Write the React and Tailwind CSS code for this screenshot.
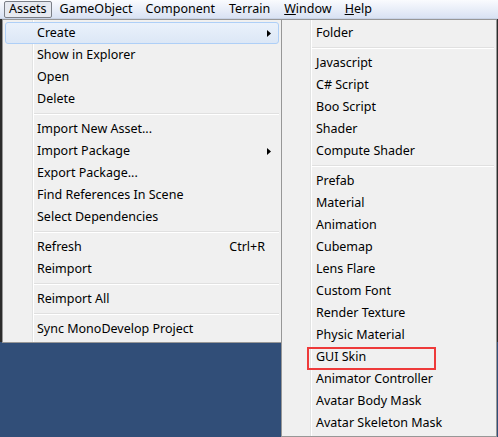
import React from 'react';

const assetsMenu = [
  { label: 'Create', arrow: true, active: true },
  { label: 'Show in Explorer' },
  { label: 'Open' },
  { label: 'Delete' },
  'sep',
  { label: 'Import New Asset...' },
  { label: 'Import Package', arrow: true },
  { label: 'Export Package...' },
  { label: 'Find References In Scene' },
  { label: 'Select Dependencies' },
  'sep',
  { label: 'Refresh', shortcut: 'Ctrl+R' },
  { label: 'Reimport' },
  'sep',
  { label: 'Reimport All' },
  'sep',
  { label: 'Sync MonoDevelop Project' },
];

const createMenu = [
  { label: 'Folder' },
  'sep',
  { label: 'Javascript' },
  { label: 'C# Script' },
  { label: 'Boo Script' },
  { label: 'Shader' },
  { label: 'Compute Shader' },
  'sep',
  { label: 'Prefab' },
  { label: 'Material' },
  { label: 'Animation' },
  { label: 'Cubemap' },
  { label: 'Lens Flare' },
  { label: 'Custom Font' },
  { label: 'Render Texture' },
  { label: 'Physic Material' },
  { label: 'GUI Skin', marked: true },
  { label: 'Animator Controller' },
  { label: 'Avatar Body Mask' },
  { label: 'Avatar Skeleton Mask' },
];

function Arrow() {
  return (
    <svg width="4" height="7" viewBox="0 0 4 7" className="absolute right-[8px] top-[8px]">
      <path d="M0 0 L4 3.5 L0 7 Z" fill="#000" />
    </svg>
  );
}

function Menu({ items, gutter, textPad, className }) {
  return (
    <div className={`absolute border border-[#979797] bg-[#f0f0f0] py-[2px] ${className}`}>
      {/* icon gutter line */}
      <div className="absolute top-0 bottom-0 flex" style={{ left: gutter }}>
        <div className="w-px h-full bg-[#e2e3e3]" />
        <div className="w-px h-full bg-white" />
      </div>
      {items.map((it, i) =>
        it === 'sep' ? (
          <div key={i} className="h-[8px] flex flex-col justify-center pr-[2px]" style={{ paddingLeft: gutter + 1 }}>
            <div className="h-px bg-[#e0e0e0]" />
            <div className="h-px bg-white" />
          </div>
        ) : (
          <div key={i} className="relative h-[22px] flex items-center mx-[2px]">
            {it.active && (
              <div className="absolute inset-0 rounded-[3px] border border-[#aecff7] bg-gradient-to-b from-[#eaf1fb] to-[#dce7f6]" />
            )}
            {it.marked && (
              <div className="absolute left-[23px] top-[1px] w-[129px] h-[23px] border-2 border-[#ee3a3a]" />
            )}
            <span className="relative whitespace-nowrap" style={{ paddingLeft: textPad }}>{it.label}</span>
            {it.shortcut && <span className="relative ml-auto mr-[14px]">{it.shortcut}</span>}
            {it.arrow && <Arrow />}
          </div>
        )
      )}
    </div>
  );
}

export default function App() {
  return (
    <div className="relative w-[498px] h-[437px] overflow-hidden bg-[#314e78] text-[12.5px] text-black font-['Noto_Sans','Liberation_Sans',sans-serif] leading-none">
      {/* menu bar */}
      <div className="h-[19px] flex items-center bg-gradient-to-b from-[#fafbfe] to-[#d9e2f3] border-b border-[#c9d3e6]">
        <div className="ml-[4px] h-[17px] px-[4px] flex items-center rounded-[2px] border border-[#7b7f87] bg-[#e6e9f0]">Assets</div>
        <span className="ml-[8px]">GameObject</span>
        <span className="ml-[13px]">Component</span>
        <span className="ml-[14px]">Terrain</span>
        <span className="ml-[14px]"><u>W</u>indow</span>
        <span className="ml-[13px]"><u>H</u>elp</span>
      </div>
      {/* editor behind the menus */}
      <div className="h-[323px] bg-[#2c2c2c]" />

      <Menu items={assetsMenu} gutter={29} textPad={32} className="left-[2px] top-[19px] w-[280px]" />
      <Menu items={createMenu} gutter={28} textPad={32} className="left-[281px] top-[19px] w-[216px]" />
    </div>
  );
}
